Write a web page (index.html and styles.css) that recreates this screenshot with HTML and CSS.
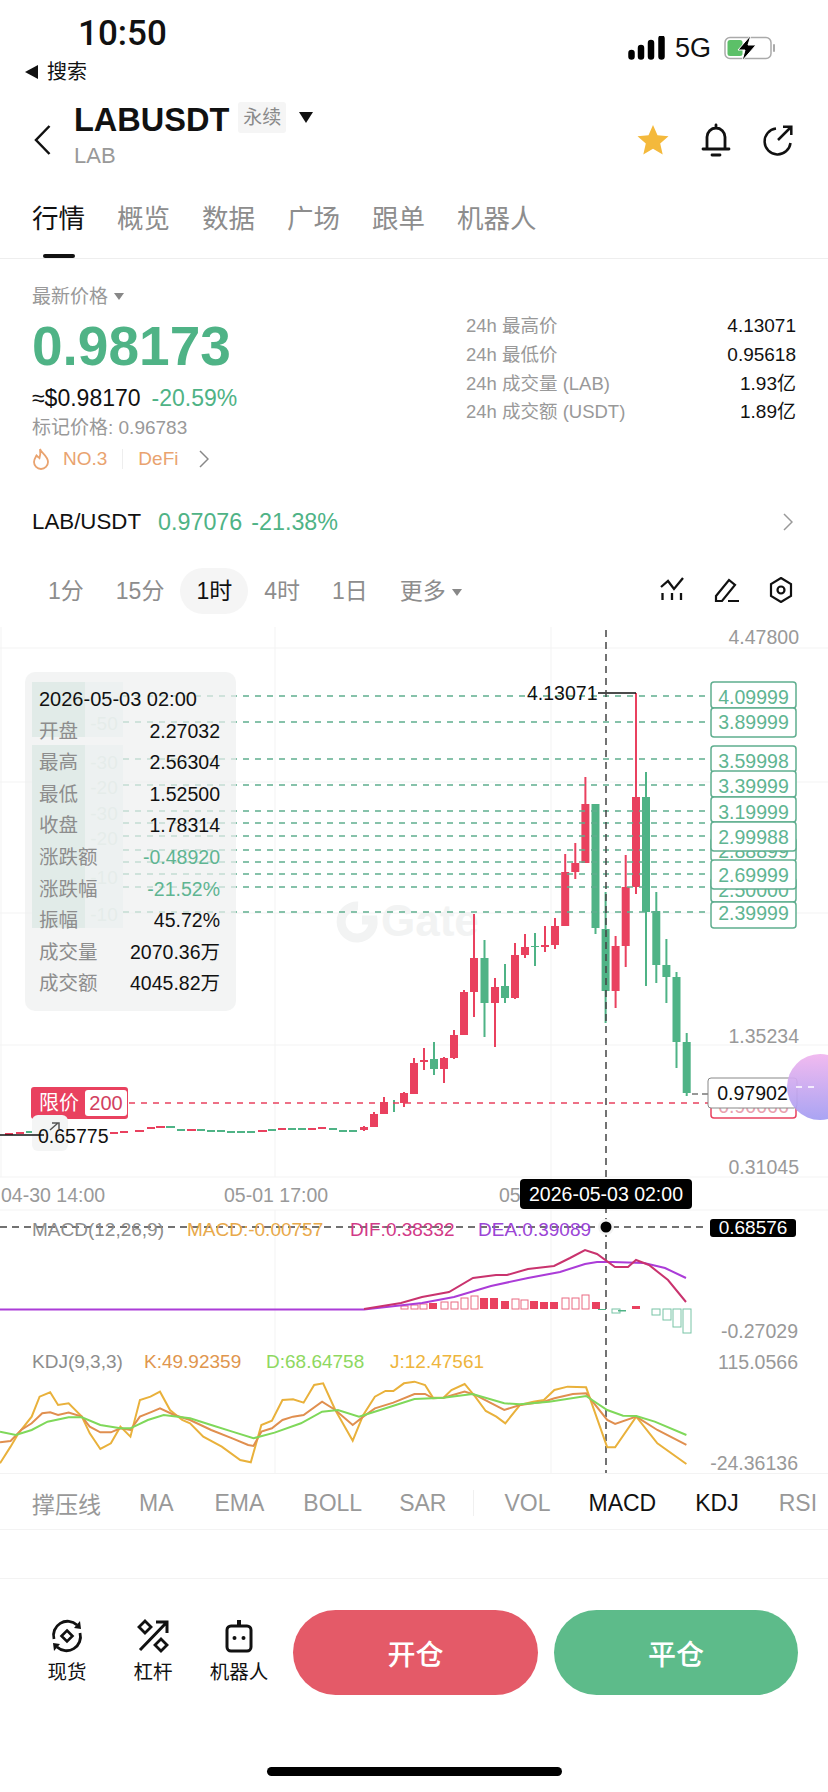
FILE: index.html
```html
<!DOCTYPE html>
<html lang="en">
<head>
    <meta charset="UTF-8">
    <meta name="viewport" content="width=device-width, initial-scale=1.0">
    <title>LABUSDT</title>
    <link rel="stylesheet" href="styles.css">
</head>
<body>
    <div class="status">
        <div>
            <div class="clock">10:50</div>
            <div class="back-app"><span class="back-tri"></span>搜索</div>
        </div>
        <div class="status-right">
            <svg class="signal" width="38" height="24" viewBox="0 0 38 24"><path d="M3.500 17v3.500M13 12v8.500M23 7v13.500M33.500 2.500v18" fill="none" stroke="#000" stroke-width="6.500" stroke-linecap="round"/></svg>
            <span class="net">5G</span>
            <svg width="52" height="26" viewBox="0 0 52 26">
                <rect x="1" y="2.500" width="46" height="21" rx="5" fill="#fff" stroke="#aaa" stroke-width="1.500"/>
                <rect x="3.500" y="5" width="15" height="16" rx="2.500" fill="#5cc068"/>
                <path d="M50 10v6" stroke="#aaa" stroke-width="2" stroke-linecap="round"/>
                <path d="M27 0 14 15h7l-3 11 14-16h-8z" fill="#000" stroke="#fff" stroke-width="1"/>
            </svg>
        </div>
    </div>

    <div class="nav">
        <svg class="nav-back" width="17" height="30" viewBox="0 0 17 30"><path d="M15.500 1 2 15l13.500 14" fill="none" stroke="#111" stroke-width="2.500"/></svg>
        <div class="nav-title">
            <div class="symbol-row">
                <span class="symbol">LABUSDT</span>
                <span class="badge">永续</span>
                <span class="down-tri"></span>
            </div>
            <div class="coin">LAB</div>
        </div>
        <div class="nav-icons">
            <svg width="32" height="31" viewBox="0 0 32 31"><path d="M16 1l4.500 10.200 11 1.100-8.300 7.300 2.500 10.900L16 24.700 6.300 30.500l2.500-10.900L.5 12.300l11-1.100z" fill="#f4b93c"/></svg>
            <svg width="32" height="34" viewBox="0 0 32 34"><path d="M16 2v3M7 25V14a9 9 0 0 1 18 0v11M3 26h26M12 32h8" fill="none" stroke="#111" stroke-width="2.800" stroke-linecap="round"/></svg>
            <svg width="32" height="32" viewBox="0 0 32 32"><path d="M27.500 19A13 13 0 1 1 13 4.500M15 16 28 3M20 2.800h8.300V11" fill="none" stroke="#111" stroke-width="2.500"/></svg>
        </div>
    </div>

    <div class="tabs">
        <div class="tab active">行情</div>
        <div class="tab">概览</div>
        <div class="tab">数据</div>
        <div class="tab">广场</div>
        <div class="tab">跟单</div>
        <div class="tab">机器人</div>
    </div>

    <div class="ticker">
        <div class="ticker-left">
            <div class="price-label">最新价格<span class="small-tri"></span></div>
            <div class="price">0.98173</div>
            <div class="sub-price">≈$0.98170<span class="pct">-20.59%</span></div>
            <div class="mark-price">标记价格: 0.96783</div>
            <div class="rank">
                <svg width="18" height="22" viewBox="0 0 18 22"><path d="M8 1c1 4 8 7 8 13a7 7 0 0 1-14 0c0-3 1.500-4.500 2.500-6.500C6 9 7 9.500 7.500 10 8.500 7 8.500 4 8 1z" fill="none" stroke="#e9a36f" stroke-width="1.800"/></svg>
                <span class="rank-no">NO.3</span>
                <span class="rank-sep"></span>
                <span>DeFi</span>
                <svg class="rank-more" width="10" height="18" viewBox="0 0 10 18"><path d="M1 1l8 8-8 8" fill="none" stroke="#888" stroke-width="1.500"/></svg>
            </div>
        </div>
        <div class="stats">
            <div class="stat"><span>24h 最高价</span><b>4.13071</b></div>
            <div class="stat"><span>24h 最低价</span><b>0.95618</b></div>
            <div class="stat"><span>24h 成交量 (LAB)</span><b>1.93亿</b></div>
            <div class="stat"><span>24h 成交额 (USDT)</span><b>1.89亿</b></div>
        </div>
    </div>

    <div class="spot-row">
        <span class="spot-name">LAB/USDT</span>
        <span class="spot-val">0.97076</span>
        <span class="spot-val">-21.38%</span>
        <svg class="spot-more" width="10" height="18" viewBox="0 0 10 18"><path d="M1 1l8 8-8 8" fill="none" stroke="#999" stroke-width="1.500"/></svg>
    </div>

    <div class="intervals">
        <div class="iv">1分</div>
        <div class="iv">15分</div>
        <div class="iv active">1时</div>
        <div class="iv">4时</div>
        <div class="iv">1日</div>
        <div class="iv">更多<span class="small-tri"></span></div>
        <div class="iv-tools">
            <svg width="26" height="26" viewBox="0 0 26 26"><path d="M1 10 8 4l6 8 9-11M2.500 16v7M12 16v7M21 16v7" fill="none" stroke="#111" stroke-width="2.300"/></svg>
            <svg width="26" height="26" viewBox="0 0 26 26"><path d="M2 19 15 3l6 5L8 24H2zM14 24h11" fill="none" stroke="#111" stroke-width="2.200"/></svg>
            <svg width="26" height="26" viewBox="0 0 26 26"><path d="M13 1l10 6v12l-10 6-10-6V7z" fill="none" stroke="#111" stroke-width="2.200"/><circle cx="13" cy="13" r="3.500" fill="none" stroke="#111" stroke-width="2.200"/></svg>
        </div>
    </div>

    <div class="chart">
        <svg class="chart-svg" width="828" height="846" viewBox="0 627 828 846">
            <defs>
                <linearGradient id="orb" x1="0" y1="0" x2="0" y2="1">
                    <stop offset="0" stop-color="#f0b4ee"/>
                    <stop offset="1" stop-color="#a29cf2"/>
                </linearGradient>
            </defs>

            <!-- grid -->
            <path class="grid" d="M0 648H828M0 782H828M0 913H828M0 1045H828M0 1177H828M0 1210H828M1 627V1177M275 627V1177M551 627V1473M275 1210V1473"/>

            <!-- watermark -->
            <g class="watermark">
                <path d="M358 906a16 16 0 1 0 15 14h-11" fill="none" stroke="#f2f3f3" stroke-width="9"/>
                <text x="381" y="936">Gate</text>
            </g>

            <!-- faded order labels behind the info panel -->
            <path class="side-strip" d="M32 682H85V737H32zM32 745H85V928H32z"/>
            <path class="side-box" d="M85 682H123V737H85zM85 745H123V928H85z"/>
            <g class="side-text">
                <text x="104" y="730">-50</text>
                <text x="104" y="769">-30</text>
                <text x="104" y="794">-20</text>
                <text x="104" y="820">-30</text>
                <text x="104" y="845">-20</text>
                <text x="104" y="884">-10</text>
                <text x="104" y="921">-10</text>
            </g>

            <!-- candles -->
            <path class="wick up" d="M636 693V894M625.700 855V967M615.600 936V1008M585.400 777V863M575.300 843V879M565.200 854V926M555 918V949M545 926V952M525 934V958M515 943V999M495 978V1047M474 914V1017M464 990V1035M454 1030V1059M444 1057V1083M424 1048V1070M414 1058V1094M404 1092V1107M384 1097V1114M374 1112V1127M364 1126V1131"/>
            <path class="body up" d="M636 797V887M625.700 887V946M615.600 946V991M585.400 804V863M575.300 863V872M565.200 872V926M555 926V945M545 945V947M525 947V955M515 955V998M495 987V1003M474 958V992M464 992V1035M454 1035V1058M444 1058V1069M424 1060V1062M414 1063V1094M404 1093V1103M384 1102V1114M374 1114V1127M364 1127V1130"/>
            <path class="wick down" d="M686.700 1033V1096M676.500 972V1068M666.400 939V1003M656.300 892V983M646 772V986M605.600 892V1023M595.500 804V934M535 933V966M505 964V1003M484.500 940V1037M434 1042V1075M394 1100V1112"/>
            <path class="body down" d="M686.700 1042V1093M676.500 977V1042M666.400 965V977M656.300 911V965M646 797V912M605.600 929V991M595.500 804V928M535 946V947M505 986V998M484.500 958V1003M434 1059V1069"/>
            <path class="mini up" d="M5 1134h8M16 1133h8M110 1133h8M120 1132h8M135 1131h9M147 1128h8M156 1127h9M187 1130h9M258 1131h9M278 1129h8M308 1129h8M318 1128h8"/>
            <path class="mini down" d="M26 1132h8M166 1127h9M177 1130h8M197 1130h8M207 1131h8M217 1131h8M227 1132h8M237 1132h8M247 1132h8M268 1130h8M288 1129h8M298 1129h8M329 1129h8M339 1131h8M349 1131h8"/>

            <!-- price order lines -->
            <path class="order-line" d="M123 696H708M123 722H708M123 759H708M123 785H708M123 811H708M123 823H708M123 836H708M123 850H708M123 862H708M123 874H708M123 887H708M123 912H708"/>
            <path class="limit-line" d="M129 1103H708"/>
            <path class="last-line" d="M692 1094H708"/>
            <path class="high-line" d="M598 693H636"/>
            <text class="high-text" x="527" y="700">4.13071</text>

            <!-- crosshair -->
            <path class="cross" d="M606 630V1473M0 1227H708"/>

            <!-- axis labels -->
            <text class="axis end" x="799" y="644">4.47800</text>
            <text class="axis end" x="799" y="1043">1.35234</text>
            <text class="axis end" x="799" y="1174">0.31045</text>
            <text class="axis" x="1" y="1202">04-30 14:00</text>
            <text class="axis" x="224" y="1202">05-01 17:00</text>
            <text class="axis" x="499" y="1202">05-02</text>

            <!-- order boxes -->
            <g class="order">
                <rect x="711" y="682" width="85" height="26" rx="3"/><text x="753.500" y="704">4.09999</text>
                <rect x="711" y="708" width="85" height="29" rx="3"/><text x="753.500" y="729">3.89999</text>
                <rect x="711" y="746" width="85" height="26" rx="3"/><text x="753.500" y="768">3.59998</text>
                <rect x="711" y="771" width="85" height="26" rx="3"/><text x="753.500" y="793">3.39999</text>
                <rect x="711" y="797" width="85" height="25" rx="3"/><text x="753.500" y="819">3.19999</text>
                <rect x="711" y="838" width="85" height="23" rx="3"/><text x="753.500" y="858">2.88899</text>
                <rect x="711" y="822" width="85" height="29" rx="3"/><text x="753.500" y="844">2.99988</text>
                <rect x="711" y="878" width="85" height="24" rx="3"/><text x="753.500" y="897">2.50000</text>
                <rect x="711" y="860" width="85" height="29" rx="3"/><text x="753.500" y="882">2.69999</text>
                <rect x="711" y="902" width="85" height="26" rx="3"/><text x="753.500" y="920">2.39999</text>
            </g>

            <!-- limit tag -->
            <rect class="limit-box" x="711" y="1092" width="85" height="26" rx="3"/>
            <text class="limit-faded" x="753.500" y="1113">0.90066</text>
            <rect class="limit-tag" x="31" y="1087" width="97" height="32" rx="3"/>
            <rect class="limit-qty" x="85" y="1090" width="42" height="26" rx="3"/>
            <text class="limit-tag-text" x="39" y="1110">限价</text>
            <text class="limit-qty-text" x="106" y="1110">200</text>

            <!-- low marker -->
            <rect class="low-box" x="32" y="1115" width="36" height="36" rx="6"/>
            <path class="low-arrow" d="M50 1130l8-7M52 1123h7v6"/>
            <path class="low-line" d="M0 1135H44"/>
            <text class="low-text" x="38" y="1143">0.65775</text>

            <!-- last price -->
            <rect class="last-box" x="708" y="1078" width="89" height="30" rx="3"/>
            <text class="last-text" x="752.500" y="1100">0.97902</text>
            <circle class="orb" cx="820" cy="1087" r="33"/>
            <path class="orb-dash" d="M796 1087h6M808 1087h6"/>

            <!-- crosshair labels -->
            <rect class="tip" x="520" y="1179" width="172" height="30" rx="4"/>
            <text class="tip-text" x="606" y="1201">2026-05-03 02:00</text>
            <circle class="cross-halo" cx="606" cy="1227" r="8"/>
            <circle class="cross-dot" cx="606" cy="1227" r="5.500"/>
            <rect class="tip" x="710" y="1219" width="86" height="18" rx="3"/>
            <text class="tip-small" x="753" y="1234">0.68576</text>

            <!-- MACD -->
            <text class="ind" y="1236"><tspan class="t-gray" x="32">MACD(12,26,9)</tspan><tspan class="t-orange" x="187">MACD:-0.00757</tspan><tspan class="t-pink" x="350">DIF:0.38332</tspan><tspan class="t-purple" x="478">DEA:0.39089</tspan></text>
            <path class="hist up-fill" d="M636 1306V1309M596 1302V1309M554 1302V1309M544 1302V1309M534 1301V1309M505 1301V1309M494 1298V1309M484 1298V1309M433 1303V1309"/>
            <g class="hist-hollow up-line">
                <rect x="582" y="1295" width="7" height="14"/><rect x="572" y="1298" width="7" height="11"/><rect x="562" y="1298" width="7" height="11"/>
                <rect x="521" y="1300" width="7" height="9"/><rect x="512" y="1299" width="7" height="10"/><rect x="471" y="1296" width="7" height="13"/>
                <rect x="461" y="1298" width="7" height="11"/><rect x="451" y="1302" width="7" height="7"/><rect x="441" y="1302" width="7" height="7"/>
                <rect x="420" y="1304" width="7" height="5"/><rect x="411" y="1305" width="7" height="4"/><rect x="401" y="1306" width="7" height="3"/>
            </g>
            <g class="hist-hollow down-line">
                <rect x="683" y="1309" width="8" height="24"/><rect x="673" y="1309" width="8" height="18"/><rect x="663" y="1309" width="8" height="11"/>
                <rect x="652" y="1309" width="8" height="6"/><rect x="612" y="1309" width="8" height="4"/>
            </g>
            <path class="hist down-fill" d="M622 1310V1311.500M602 1309V1310"/>
            <path class="macd-dea" d="M0 1309.500H364L422 1303 454 1297 491 1286 528 1278 560 1272 585 1264 597 1262 612 1262 644 1263 665 1268 686 1278"/>
            <path class="macd-dif" d="M364 1309 401 1303 422 1297 449 1292 473 1278 496 1275 507 1275 528 1269 554 1266 570 1258 585 1250 597 1254 615 1267 628 1267 636 1260 649 1265 668 1280 686 1302"/>
            <text class="axis end" x="798" y="1338">-0.27029</text>

            <!-- KDJ -->
            <text class="ind" y="1368"><tspan class="t-gray" x="32">KDJ(9,3,3)</tspan><tspan class="t-korange" x="144">K:49.92359</tspan><tspan class="t-green" x="266">D:68.64758</tspan><tspan class="t-yellow" x="390">J:12.47561</tspan></text>
            <text class="axis end" x="798" y="1369">115.0566</text>
            <text class="axis end" x="798" y="1470">-24.36136</text>
            <g class="kdj-lines" transform="translate(0 1210) scale(.528 .3333)">
                <path class="kdj-j" d="M0 760 20 710 35 670 60 620 75 560 95 547 110 585 130 580 155 620 170 670 190 717 210 700 228 650 247 680 265 570 285 560 303 545 322 600 345 630 360 640 385 680 420 710 455 750 475 757 495 645 515 632 535 570 555 568 575 578 595 525 612 520 635 600 668 692 688 615 710 560 730 543 745 543 765 520 785 515 805 525 820 563 840 563 855 540 880 522 900 560 920 603 940 620 957 640 985 585 1010 575 1030 570 1050 540 1075 530 1110 532 1150 712 1165 712 1205 620 1245 700 1300 762"/>
                <path class="kdj-k" d="M0 697 20 693 40 660 60 640 80 610 95 607 110 615 130 608 155 620 170 650 190 667 210 667 228 655 247 660 265 620 285 607 303 595 330 615 360 630 400 660 440 685 470 705 480 708 495 665 515 655 535 630 555 620 575 615 610 575 635 600 668 645 688 620 710 595 745 578 785 552 805 552 820 565 840 563 880 545 900 555 955 600 985 585 1030 575 1050 565 1085 552 1110 550 1150 630 1165 642 1205 620 1245 660 1300 705"/>
                <path class="kdj-d" d="M0 665 30 675 60 660 90 635 130 622 155 622 190 645 228 655 247 655 280 630 310 615 360 625 400 645 440 665 480 685 520 668 570 640 610 605 640 600 680 620 720 600 785 567 840 563 895 552 955 580 985 583 1040 575 1110 558 1150 600 1180 617 1205 618 1240 635 1300 675"/>
            </g>
        </svg>

        <div class="info">
            <div class="info-date">2026-05-03 02:00</div>
            <div class="info-row"><span>开盘</span><b>2.27032</b></div>
            <div class="info-row"><span>最高</span><b>2.56304</b></div>
            <div class="info-row"><span>最低</span><b>1.52500</b></div>
            <div class="info-row"><span>收盘</span><b>1.78314</b></div>
            <div class="info-row"><span>涨跌额</span><b class="neg">-0.48920</b></div>
            <div class="info-row"><span>涨跌幅</span><b class="neg">-21.52%</b></div>
            <div class="info-row"><span>振幅</span><b>45.72%</b></div>
            <div class="info-row"><span>成交量</span><b>2070.36万</b></div>
            <div class="info-row"><span>成交额</span><b>4045.82万</b></div>
        </div>
    </div>

    <div class="indicators">
        <span class="ind-item support">撑压线</span>
        <span class="ind-item ma">MA</span>
        <span class="ind-item ema">EMA</span>
        <span class="ind-item boll">BOLL</span>
        <span class="ind-item sar">SAR</span>
        <span class="ind-sep"></span>
        <span class="ind-item vol">VOL</span>
        <span class="ind-item on macd">MACD</span>
        <span class="ind-item on kdj">KDJ</span>
        <span class="ind-item rsi">RSI</span>
    </div>
    <div class="gap-band"></div>

    <div class="actions">
        <div class="act">
            <svg width="34" height="34" viewBox="0 0 34 34"><path d="M4 20A14 14 0 0 1 27 6M30 14A14 14 0 0 1 7 28" fill="none" stroke="#111" stroke-width="2.800"/><path d="M24 9l7 1-1-8zM10 25l-7-1 1 8z" fill="#111"/><path d="M17 11.500l5.500 5.500-5.500 5.500-5.500-5.500z" fill="none" stroke="#111" stroke-width="2.600"/></svg>
            <span>现货</span>
        </div>
        <div class="act">
            <svg width="34" height="34" viewBox="0 0 34 34"><path d="M4 31 31 3M20 3h11v11" fill="none" stroke="#111" stroke-width="3"/><path d="M9 2l6 6-6 6-6-6zM25 20l6 6-6 6-6-6z" fill="none" stroke="#111" stroke-width="2.800"/></svg>
            <span>杠杆</span>
        </div>
        <div class="act">
            <svg width="34" height="34" viewBox="0 0 34 34"><path d="M17 1v5" stroke="#111" stroke-width="4"/><rect x="5" y="7" width="24" height="25" rx="4" fill="none" stroke="#111" stroke-width="3"/><circle cx="12.500" cy="19" r="2" fill="#111"/><circle cx="21.500" cy="19" r="2" fill="#111"/></svg>
            <span>机器人</span>
        </div>
        <button class="trade open" type="button">开仓</button>
        <button class="trade close" type="button">平仓</button>
    </div>
    <div class="home-bar"></div>
</body>
</html>
```

FILE: styles.css
```css
* {
    box-sizing: border-box;
}

body {
    margin: 0;
    width: 828px;
    height: 1792px;
    overflow: hidden;
    background-color: #fff;
    color: #111;
    font-family: "Liberation Sans", "Noto Sans CJK SC", sans-serif;
}

/* status bar */
.status {
    display: flex;
    justify-content: space-between;
    height: 86px;
    padding: 16px 52px 0 25px;
}
.clock {
    margin-left: 53px;
    font-family: Roboto, sans-serif;
    font-size: 35px;
    font-weight: 500;
    line-height: 36px;
}
.back-app {
    display: flex;
    align-items: center;
    margin-top: 6px;
    font-size: 20px;
    line-height: 28px;
}
.back-tri {
    width: 0;
    height: 0;
    margin-right: 9px;
    border-top: 7px solid transparent;
    border-bottom: 7px solid transparent;
    border-right: 13px solid #111;
}
.status-right {
    display: flex;
    align-items: center;
    height: 24px;
    margin-top: 20px;
}
.net {
    margin: 0 13px 0 9px;
    font-size: 27px;
}

/* title bar */
.nav {
    display: flex;
    align-items: center;
    height: 107px;
    padding: 0 34px;
}
.nav-title {
    margin-left: 23px;
    margin-top: -8px;
}
.symbol-row {
    display: flex;
    align-items: center;
    height: 40px;
}
.symbol {
    font-size: 32.500px;
    font-weight: bold;
}
.badge {
    display: block;
    margin: -6px 0 0 9px;
    padding: 0 5px;
    background-color: #f5f5f5;
    border-radius: 3px;
    color: #8a8a8a;
    font-size: 19px;
    line-height: 31px;
}
.down-tri {
    width: 0;
    height: 0;
    margin: -6px 0 0 13px;
    border-left: 7.500px solid transparent;
    border-right: 7.500px solid transparent;
    border-top: 11px solid #111;
}
.coin {
    color: #999;
    font-size: 22px;
    line-height: 30px;
}
.nav-icons {
    display: flex;
    align-items: center;
    gap: 31px;
    margin-left: auto;
    margin-right: -1px;
}

/* main tabs */
.tabs {
    display: flex;
    gap: 32px;
    height: 66px;
    padding: 9px 32px 0;
    border-bottom: 1px solid #eee;
}
.tab {
    color: #8d8d8d;
    font-size: 26.500px;
    line-height: 34px;
}
.tab.active {
    color: #111;
}
.tab.active::after {
    content: "";
    display: block;
    width: 32px;
    height: 4px;
    margin: 18px auto 0;
    background-color: #111;
    border-radius: 2px;
}

/* price block */
.ticker {
    display: flex;
    justify-content: space-between;
    height: 238px;
    padding: 23px 32px 0;
}
.small-tri {
    display: inline-block;
    width: 0;
    height: 0;
    margin: 0 0 3px 6px;
    border-left: 5.500px solid transparent;
    border-right: 5.500px solid transparent;
    border-top: 7px solid #888;
}
.price-label {
    color: #999;
    font-size: 19px;
    line-height: 30px;
}
.price {
    margin-top: 4px;
    color: #4fb386;
    font-size: 55px;
    font-weight: bold;
    line-height: 60px;
}
.sub-price {
    margin-top: 7px;
    font-size: 23px;
    line-height: 30px;
}
.pct {
    margin-left: 11px;
    color: #4fb386;
}
.mark-price {
    margin-top: 0;
    color: #999;
    font-size: 19px;
    line-height: 30px;
}
.rank {
    display: flex;
    align-items: center;
    margin-top: 1px;
    color: #e9a36f;
    font-size: 19px;
    line-height: 30px;
}
.rank-no {
    margin-left: 13px;
}
.rank-sep {
    width: 1px;
    height: 20px;
    margin: 0 15px;
    background-color: #eee;
}
.rank-more {
    margin-left: 21px;
}
.stats {
    width: 330px;
    margin-top: 29px;
}
.stat {
    display: flex;
    justify-content: space-between;
    height: 28.800px;
    color: #999;
    font-size: 18.500px;
    line-height: 29px;
}
.stat b {
    color: #111;
    font-size: 19px;
    font-weight: normal;
}

/* spot row */
.spot-row {
    display: flex;
    align-items: center;
    height: 50px;
    padding: 0 35px 0 32px;
    font-size: 23.300px;
}
.spot-name {
    margin-right: 17px;
    font-size: 22.300px;
}
.spot-val {
    margin-right: 9px;
    color: #4fb386;
}
.spot-more {
    margin-left: auto;
}

/* intervals */
.intervals {
    display: flex;
    align-items: flex-start;
    height: 80px;
    padding: 21px 34px 0 32px;
}
.iv {
    padding: 0 16px;
    color: #8d8d8d;
    font-size: 23px;
    line-height: 46px;
}
.iv.active {
    background-color: #f5f5f5;
    border-radius: 23px;
    color: #111;
}
.iv-tools {
    display: flex;
    gap: 28px;
    margin-left: auto;
    padding-top: 9px;
}

/* chart canvas */
.chart {
    position: relative;
    height: 846px;
}
.chart-svg {
    display: block;
    font-size: 19px;
}
.grid {
    fill: none;
    stroke: #f3f3f3;
    stroke-width: 1;
}
.watermark text {
    fill: #f2f3f3;
    font-size: 44px;
    font-weight: bold;
}
.side-strip {
    fill: #c2e0d6;
}
.side-box {
    fill: #ebf6f3;
}
.side-text text {
    fill: #cfe3dc;
    font-size: 19px;
    text-anchor: middle;
}
.wick, .body, .mini {
    fill: none;
}
.wick {
    stroke-width: 2;
}
.body {
    stroke-width: 8;
}
.mini {
    stroke-width: 2;
}
.wick.up, .body.up, .mini.up {
    stroke: #e9415f;
}
.wick.down, .body.down, .mini.down {
    stroke: #4fb386;
}
.order-line {
    fill: none;
    stroke: #5fae8f;
    stroke-width: 1.500;
    stroke-dasharray: 6 6;
}
.limit-line {
    fill: none;
    stroke: #e9415f;
    stroke-width: 1.500;
    stroke-dasharray: 6 6;
}
.last-line {
    fill: none;
    stroke: #333;
    stroke-width: 1.200;
    stroke-dasharray: 6 4;
}
.high-line, .low-line {
    fill: none;
    stroke: #111;
    stroke-width: 1.500;
}
.high-text, .low-text {
    fill: #111;
    font-size: 19.500px;
}
.cross {
    fill: none;
    stroke: #444;
    stroke-width: 1.500;
    stroke-dasharray: 7 5;
}
.axis {
    fill: #999;
    font-size: 19.500px;
}
.axis.end {
    text-anchor: end;
}
.order rect {
    fill: #fff;
    stroke: #5fae8f;
    stroke-width: 1.500;
}
.order text {
    fill: #5fb592;
    font-size: 19.500px;
    text-anchor: middle;
}
.limit-box {
    fill: #fff;
    stroke: #e9415f;
    stroke-width: 1.500;
}
.limit-faded {
    fill: #e9a0ae;
    font-size: 19.500px;
    text-anchor: middle;
}
.limit-tag {
    fill: #e9415f;
}
.limit-qty {
    fill: #fff;
}
.limit-tag-text {
    fill: #fff;
    font-size: 20px;
}
.limit-qty-text {
    fill: #d2415f;
    font-size: 20px;
    text-anchor: middle;
}
.low-box {
    fill: #f4f5f5;
}
.low-arrow {
    fill: none;
    stroke: #555;
    stroke-width: 1.500;
}
.last-box {
    fill: #fff;
    stroke: #888;
    stroke-width: 1;
}
.last-text {
    fill: #111;
    font-size: 19.500px;
    text-anchor: middle;
}
.orb {
    fill: url(#orb);
    opacity: .92;
}
.orb-dash {
    fill: none;
    stroke: #fff;
    stroke-width: 1.500;
}
.tip {
    fill: #000;
}
.tip-text {
    fill: #fff;
    font-size: 19.500px;
    text-anchor: middle;
}
.tip-small {
    fill: #fff;
    font-size: 19px;
    text-anchor: middle;
}
.cross-halo {
    fill: #f3f3f3;
}
.cross-dot {
    fill: #000;
}
.ind {
    font-size: 19px;
}
.t-gray { fill: #8d8d8d; }
.t-orange { fill: #e8a94a; }
.t-pink { fill: #d23a88; }
.t-purple { fill: #9b45d6; }
.t-korange { fill: #e0964e; }
.t-green { fill: #8ed860; }
.t-yellow { fill: #eeb53c; }
.hist {
    fill: none;
    stroke-width: 8;
}
.up-fill {
    stroke: #e9415f;
}
.down-fill {
    stroke: #4fb386;
}
.hist-hollow rect {
    fill: #fff;
    stroke-width: 1;
}
.up-line rect {
    stroke: #ea6a82;
}
.down-line rect {
    stroke: #79c4a6;
}
.macd-dif {
    fill: none;
    stroke: #c9336e;
    stroke-width: 2;
}
.macd-dea {
    fill: none;
    stroke: #ab3cd8;
    stroke-width: 2;
}
.kdj-lines path {
    fill: none;
    stroke-width: 2;
    vector-effect: non-scaling-stroke;
}
.kdj-j {
    stroke: #e9b13b;
}
.kdj-k {
    stroke: #e08f4f;
}
.kdj-d {
    stroke: #7fd85a;
}

/* floating OHLC panel */
.info {
    position: absolute;
    left: 25px;
    top: 45px;
    width: 211px;
    height: 339px;
    padding: 12px 16px 0 14px;
    background-color: rgba(238, 240, 240, .7);
    border-radius: 10px;
    font-size: 19.500px;
}
.info-date {
    height: 31.600px;
    font-size: 20px;
    line-height: 31.600px;
    white-space: nowrap;
}
.info-row {
    display: flex;
    justify-content: space-between;
    height: 31.600px;
    color: #8d8d8d;
    line-height: 31.600px;
}
.info-row b {
    color: #111;
    font-weight: normal;
}
.info-row b.neg {
    color: #5fb592;
}

/* indicator tabs */
.indicators {
    display: flex;
    align-items: center;
    height: 57px;
    padding: 3px 0 0 32px;
    border-top: 1px solid #f3f3f3;
    border-bottom: 1px solid #f3f3f3;
    color: #999;
    font-size: 23px;
}
.ind-item {
    flex: none;
}
.ind-item.on {
    color: #111;
}
.ma { margin-left: 38px; }
.ema { margin-left: 41px; }
.boll { margin-left: 39px; }
.sar { margin-left: 37px; }
.ind-sep {
    width: 1px;
    height: 26px;
    margin-left: 27px;
    background-color: #f0f0f0;
}
.vol { margin-left: 30px; }
.macd { margin-left: 38px; }
.kdj { margin-left: 39px; }
.rsi { margin-left: 40px; }
.gap-band {
    height: 49px;
    border-bottom: 1px solid #f3f3f3;
}

/* bottom actions */
.actions {
    display: flex;
    align-items: flex-start;
    height: 116px;
    padding: 31px 30px 0 24px;
}
.act {
    display: flex;
    flex-direction: column;
    align-items: center;
    width: 86px;
    padding-top: 9px;
    font-size: 19.500px;
}
.act span {
    margin-top: 5px;
    line-height: 28px;
}
.act:nth-child(3) {
    margin-right: 11px;
}
.trade {
    height: 85px;
    border: none;
    border-radius: 43px;
    color: #fff;
    font-family: "Noto Sans CJK SC", sans-serif;
    font-size: 28px;
    font-weight: 500;
}
.trade.open {
    width: 245px;
    background-color: #e45a68;
}
.trade.close {
    width: 244px;
    margin-left: 16px;
    background-color: #5dbb8a;
}
.home-bar {
    width: 295px;
    height: 9px;
    margin: 72px auto 0;
    background-color: #000;
    border-radius: 5px;
}
```
